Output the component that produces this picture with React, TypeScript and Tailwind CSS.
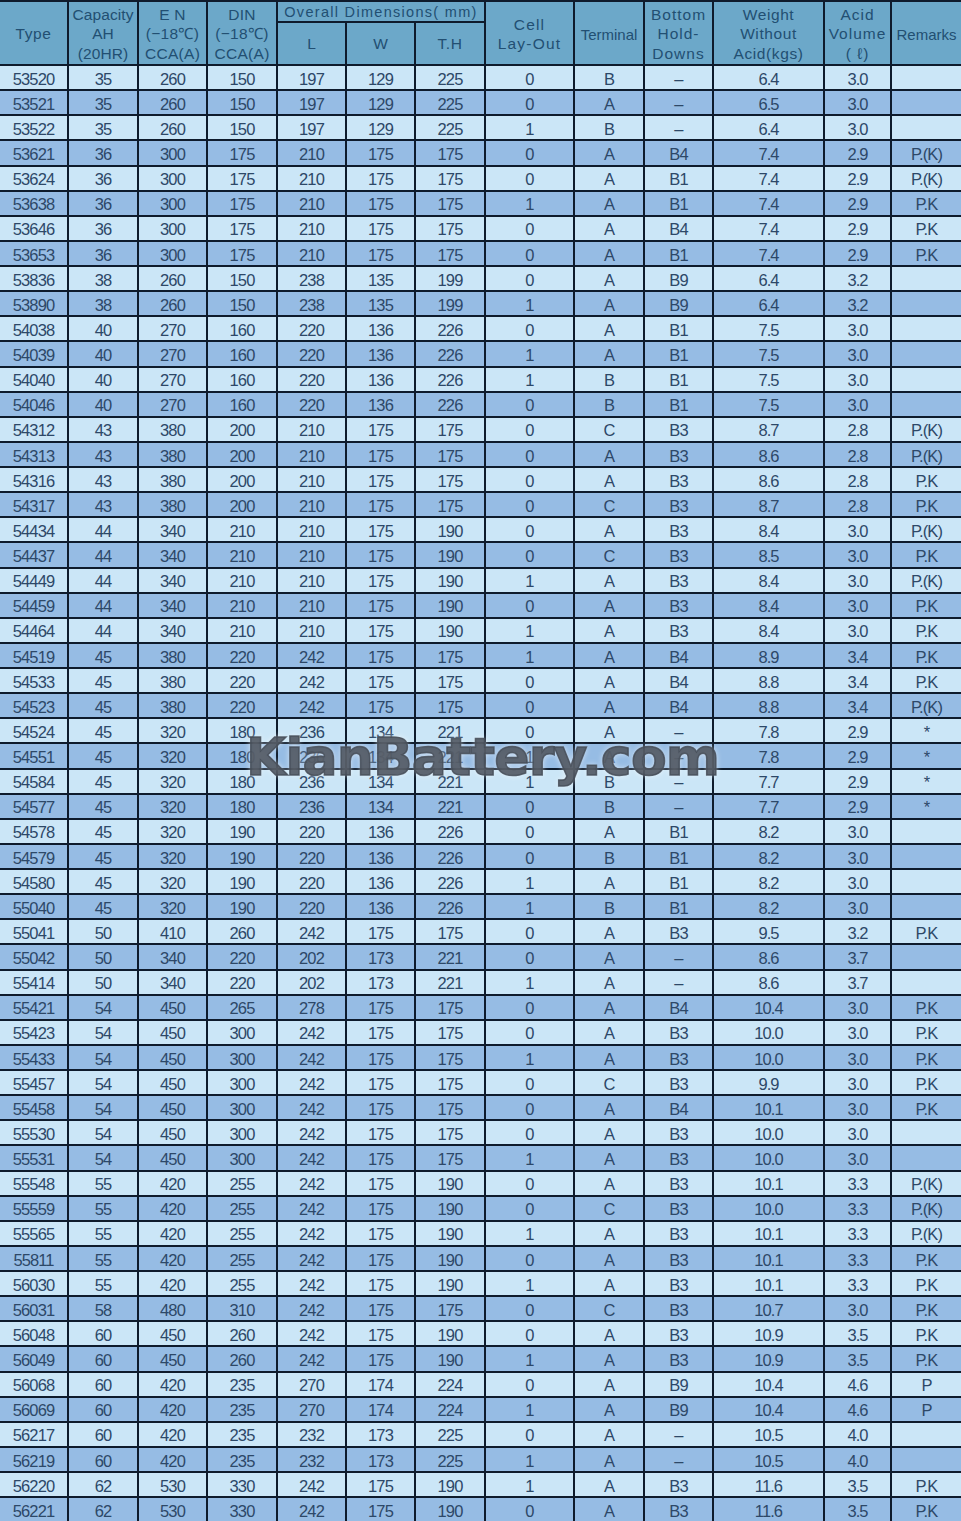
import React from "react";

const raw = `53520 35 260 150 197 129 225 0 B – 6.4 3.0 _
53521 35 260 150 197 129 225 0 A – 6.5 3.0 _
53522 35 260 150 197 129 225 1 B – 6.4 3.0 _
53621 36 300 175 210 175 175 0 A B4 7.4 2.9 P.(K)
53624 36 300 175 210 175 175 0 A B1 7.4 2.9 P.(K)
53638 36 300 175 210 175 175 1 A B1 7.4 2.9 P.K
53646 36 300 175 210 175 175 0 A B4 7.4 2.9 P.K
53653 36 300 175 210 175 175 0 A B1 7.4 2.9 P.K
53836 38 260 150 238 135 199 0 A B9 6.4 3.2 _
53890 38 260 150 238 135 199 1 A B9 6.4 3.2 _
54038 40 270 160 220 136 226 0 A B1 7.5 3.0 _
54039 40 270 160 220 136 226 1 A B1 7.5 3.0 _
54040 40 270 160 220 136 226 1 B B1 7.5 3.0 _
54046 40 270 160 220 136 226 0 B B1 7.5 3.0 _
54312 43 380 200 210 175 175 0 C B3 8.7 2.8 P.(K)
54313 43 380 200 210 175 175 0 A B3 8.6 2.8 P.(K)
54316 43 380 200 210 175 175 0 A B3 8.6 2.8 P.K
54317 43 380 200 210 175 175 0 C B3 8.7 2.8 P.K
54434 44 340 210 210 175 190 0 A B3 8.4 3.0 P.(K)
54437 44 340 210 210 175 190 0 C B3 8.5 3.0 P.K
54449 44 340 210 210 175 190 1 A B3 8.4 3.0 P.(K)
54459 44 340 210 210 175 190 0 A B3 8.4 3.0 P.K
54464 44 340 210 210 175 190 1 A B3 8.4 3.0 P.K
54519 45 380 220 242 175 175 1 A B4 8.9 3.4 P.K
54533 45 380 220 242 175 175 0 A B4 8.8 3.4 P.K
54523 45 380 220 242 175 175 0 A B4 8.8 3.4 P.(K)
54524 45 320 180 236 134 221 0 A – 7.8 2.9 *
54551 45 320 180 236 134 221 1 A – 7.8 2.9 *
54584 45 320 180 236 134 221 1 B – 7.7 2.9 *
54577 45 320 180 236 134 221 0 B – 7.7 2.9 *
54578 45 320 190 220 136 226 0 A B1 8.2 3.0 _
54579 45 320 190 220 136 226 0 B B1 8.2 3.0 _
54580 45 320 190 220 136 226 1 A B1 8.2 3.0 _
55040 45 320 190 220 136 226 1 B B1 8.2 3.0 _
55041 50 410 260 242 175 175 0 A B3 9.5 3.2 P.K
55042 50 340 220 202 173 221 0 A – 8.6 3.7 _
55414 50 340 220 202 173 221 1 A – 8.6 3.7 _
55421 54 450 265 278 175 175 0 A B4 10.4 3.0 P.K
55423 54 450 300 242 175 175 0 A B3 10.0 3.0 P.K
55433 54 450 300 242 175 175 1 A B3 10.0 3.0 P.K
55457 54 450 300 242 175 175 0 C B3 9.9 3.0 P.K
55458 54 450 300 242 175 175 0 A B4 10.1 3.0 P.K
55530 54 450 300 242 175 175 0 A B3 10.0 3.0 _
55531 54 450 300 242 175 175 1 A B3 10.0 3.0 _
55548 55 420 255 242 175 190 0 A B3 10.1 3.3 P.(K)
55559 55 420 255 242 175 190 0 C B3 10.0 3.3 P.(K)
55565 55 420 255 242 175 190 1 A B3 10.1 3.3 P.(K)
55811 55 420 255 242 175 190 0 A B3 10.1 3.3 P.K
56030 55 420 255 242 175 190 1 A B3 10.1 3.3 P.K
56031 58 480 310 242 175 175 0 C B3 10.7 3.0 P.K
56048 60 450 260 242 175 190 0 A B3 10.9 3.5 P.K
56049 60 450 260 242 175 190 1 A B3 10.9 3.5 P.K
56068 60 420 235 270 174 224 0 A B9 10.4 4.6 P
56069 60 420 235 270 174 224 1 A B9 10.4 4.6 P
56217 60 420 235 232 173 225 0 A – 10.5 4.0 _
56219 60 420 235 232 173 225 1 A – 10.5 4.0 _
56220 62 530 330 242 175 190 1 A B3 11.6 3.5 P.K
56221 62 530 330 242 175 190 0 A B3 11.6 3.5 P.K`;

const rows = raw.split("\n").map((l) => l.trim().split(/\s+/).map((c) => (c === "_" ? "" : c)));

const hdr =
  "bg-[#6ca8c9] text-[#224f72] flex items-center justify-center text-center leading-[19.5px]";

function H({ className = "", children }: { className?: string; children: React.ReactNode }) {
  return <div className={`${hdr} ${className}`}>{children}</div>;
}

export default function App() {
  return (
    <div className="relative w-[961px] h-[1521px] overflow-hidden bg-[#0e1b2c] font-['Liberation_Sans',Arial,sans-serif]">
      <div className="grid pt-[2px] gap-[2px] grid-cols-[67px_68px_67px_68px_67px_67px_68px_87px_68px_67px_109px_65px_69px] grid-rows-[19px_41px] auto-rows-[23.14px]">
        <H className="row-span-2 col-start-1 row-start-1 pt-[2px] text-[15.5px] tracking-[0.6px]">Type</H>
        <H className="row-span-2 col-start-2 row-start-1 text-[15.5px] tracking-[0.1px] pt-[2px]">
          Capacity
          <br />
          AH
          <br />
          (20HR)
        </H>
        <H className="row-span-2 col-start-3 row-start-1 pt-[2px] text-[15.5px] tracking-[0.3px]">
          E N
          <br />
          (−18℃)
          <br />
          CCA(A)
        </H>
        <H className="row-span-2 col-start-4 row-start-1 pt-[2px] text-[15.5px] tracking-[0.3px]">
          DIN
          <br />
          (−18℃)
          <br />
          CCA(A)
        </H>
        <H className="col-start-5 col-span-3 row-start-1 whitespace-nowrap tracking-[1.3px] text-[14.5px] pt-[3px]">
          Overall Dimensions( mm)
        </H>
        <H className="col-start-5 row-start-2 text-[15.5px]">L</H>
        <H className="col-start-6 row-start-2 text-[15.5px]">W</H>
        <H className="col-start-7 row-start-2 text-[15.5px] tracking-[0.6px]">T.H</H>
        <H className="row-span-2 col-start-8 row-start-1 text-[15.5px] tracking-[1.2px] pt-[2px]">
          Cell
          <br />
          Lay-Out
        </H>
        <H className="row-span-2 col-start-9 row-start-1 text-[15px] tracking-[0px] pt-[4px]">Terminal</H>
        <H className="row-span-2 col-start-10 row-start-1 text-[15.5px] tracking-[1px] pt-[2px]">
          Bottom
          <br />
          Hold-
          <br />
          Downs
        </H>
        <H className="row-span-2 col-start-11 row-start-1 text-[15.5px] tracking-[0.6px] pt-[2px]">
          Weight
          <br />
          Without
          <br />
          Acid(kgs)
        </H>
        <H className="row-span-2 col-start-12 row-start-1 text-[15.5px] tracking-[1px] pt-[2px]">
          Acid
          <br />
          Volume
          <br />( ℓ)
        </H>
        <H className="row-span-2 col-start-13 row-start-1 text-[15px] tracking-[0px] pt-[4px]">Remarks</H>

        {rows.map((r, i) =>
          r.map((c, j) => (
            <div
              key={`${i}-${j}`}
              className={`flex items-center justify-center pt-[3px] text-[16.5px] tracking-[-0.9px] text-[#2d4868] ${
                i % 2 === 0 ? "bg-[#cbe6f7]" : "bg-[#96bce4]"
              }`}
            >
              {c}
            </div>
          ))
        )}
      </div>

      <div className="absolute left-[246px] top-[731px] pointer-events-none text-[52px] leading-[52px] font-bold tracking-[-0.8px] text-[rgba(70,78,88,0.85)] font-['DejaVu_Sans',sans-serif] [-webkit-text-stroke:1.5px_rgba(70,78,88,0.85)] [text-shadow:0_0_6px_rgba(255,255,255,0.7)]">
        KianBattery.com
      </div>
    </div>
  );
}
